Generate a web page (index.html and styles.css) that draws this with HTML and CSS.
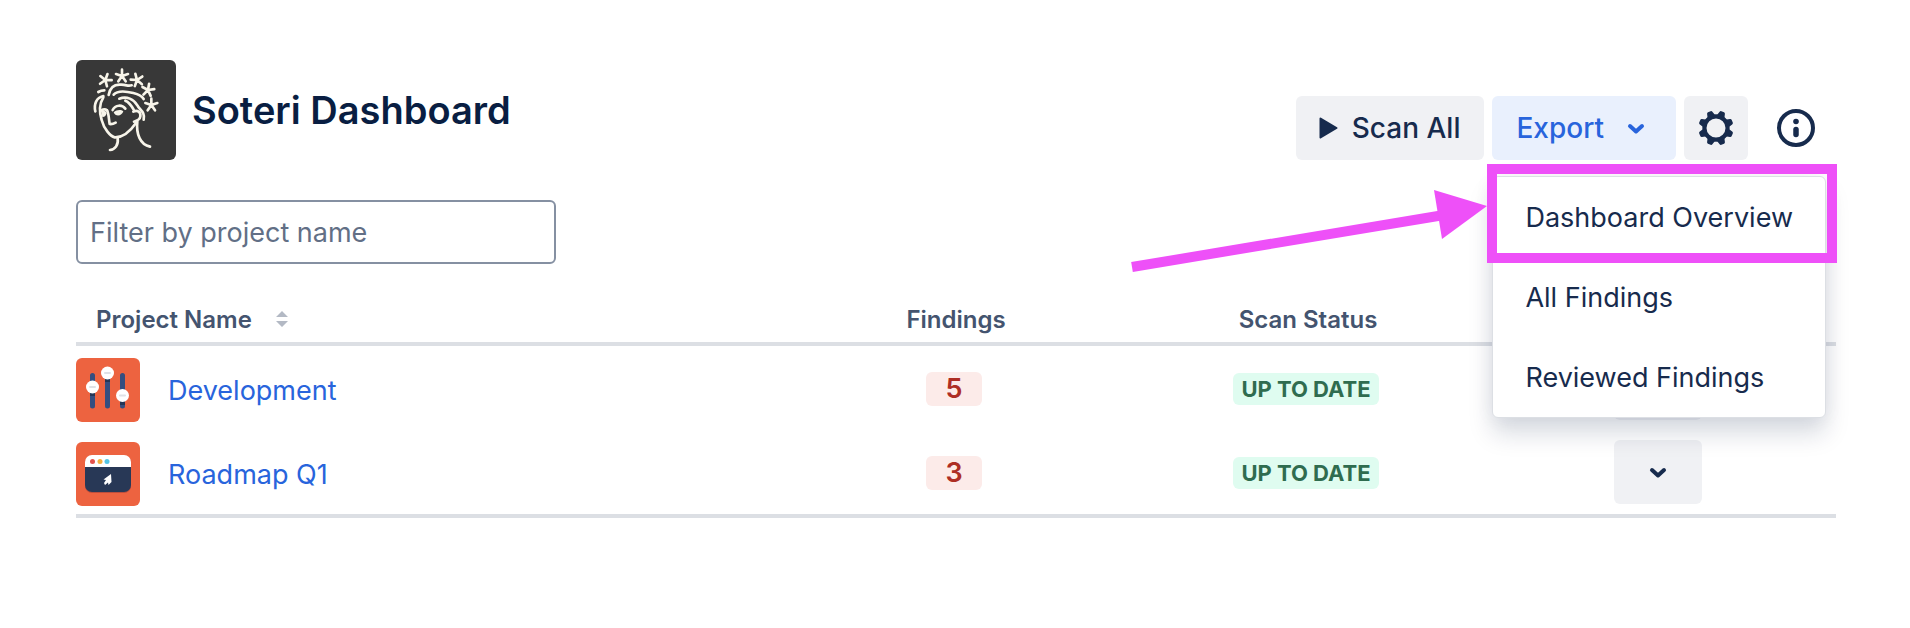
FILE: index.html
```
<!DOCTYPE html>
<html lang="en">
  <head>
    <meta charset="UTF-8" />
    <meta name="viewport" content="width=device-width, initial-scale=1.0" />
    <title>Soteri Dashboard</title>
    <link rel="stylesheet" href="styles.css">
  </head>
  <body>
    <div class="page">
      <header class="page-header">
        <div class="brand">
          <svg class="logo" viewBox="0 0 300 300" aria-hidden="true">
            <defs>
              <path id="star" d="M0 -19V0M18 -6L0 0M11 16L0 0M-11 16L0 0M-18 -6L0 0" />
            </defs>
            <rect width="300" height="300" rx="18" fill="#383838" />
            <g fill="none" stroke="#f8f5ea" stroke-width="8" stroke-linecap="round" stroke-linejoin="round">
              <use href="#star" transform="translate(88 60) rotate(20)" />
              <use href="#star" transform="translate(138 48)" />
              <use href="#star" transform="translate(183 60) rotate(-15)" />
              <use href="#star" transform="translate(216 90) rotate(10)" />
              <use href="#star" transform="translate(226 135)" />
              <path d="M98 105C102 82 116 72 136 74S156 79 167 76" />
              <path d="M113 104C126 89 152 94 172 99S199 110 203 117" />
              <path d="M130 116C152 107 174 118 184 136C190 150 208 154 203 179" />
              <path d="M148 122C158 126 166 136 173 149" />
              <path d="M67 96Q75 91 85 91M58 154C53 132 61 113 82 108" />
              <path d="M82 112C69 133 71 160 77 180C84 207 103 229 116 232C140 233 164 212 180 189" />
              <path d="M172 155C184 149 195 156 193 169C192 178 184 182 174 185" />
              <path d="M125 235C128 255 117 268 102 270M184 184C180 223 193 254 222 260" />
              <path d="M93 151C99 162 98 176 101 192Q110 193 119 188" />
              <path d="M110 150C118 134 138 133 148 146M76 151Q86 145 93 151" />
            </g>
            <g fill="#f8f5ea">
              <path d="M113 157C122 148 136 148 142 154C138 169 118 171 113 157Z" />
              <path d="M75 153Q90 150 92 159Q89 172 79 171Z" />
            </g>
          </svg>
          <h1>Soteri Dashboard</h1>
        </div>

        <div class="actions">
          <button class="btn btn-scan" type="button">
            <svg class="icon" viewBox="0 0 32 32" aria-hidden="true">
              <path d="M8.500 6.500L24.500 16L8.500 25.500Z" fill="currentColor" stroke="currentColor" stroke-width="2" stroke-linejoin="round" />
            </svg>
            Scan All
          </button>
          <div class="dropdown">
            <button class="btn btn-selected" type="button" aria-expanded="true">
              Export
              <svg class="icon" viewBox="0 0 32 32" aria-hidden="true">
                <path d="M10 14L16 19.500L22 14" fill="none" stroke="currentColor" stroke-width="4" stroke-linecap="round" stroke-linejoin="round" />
              </svg>
            </button>
            <div class="menu">
              <button type="button">Dashboard Overview</button>
              <button type="button">All Findings</button>
              <button type="button">Reviewed Findings</button>
            </div>
            <div class="highlight"></div>
            <svg class="arrow" viewBox="0 0 360 84" aria-hidden="true">
              <path d="M4 79L316 27" fill="none" stroke="#ee50f8" stroke-width="10" />
              <path d="M306 2L359 18L314 51Z" fill="#ee50f8" />
            </svg>
          </div>
          <button class="btn btn-icon" type="button" aria-label="Settings">
            <svg viewBox="0 0 40 40" aria-hidden="true">
              <circle cx="20" cy="20" r="12.200" fill="none" stroke="currentColor" stroke-width="4.400" />
              <g fill="currentColor">
                <path id="teeth" d="M15.500 8L17 2.800Q17.300 1.500 18.500 1.500H21.500Q22.700 1.500 23 2.800L24.500 8ZM15.500 32L17 37.200Q17.300 38.500 18.500 38.500H21.500Q22.700 38.500 23 37.200L24.500 32Z" transform="rotate(22.500 20 20)" />
                <use href="#teeth" transform="rotate(45 20 20)" />
                <use href="#teeth" transform="rotate(90 20 20)" />
                <use href="#teeth" transform="rotate(135 20 20)" />
              </g>
            </svg>
          </button>
          <button class="btn btn-info" type="button" aria-label="About">
            <svg viewBox="0 0 40 40" aria-hidden="true">
              <circle cx="20" cy="20" r="17" fill="none" stroke="currentColor" stroke-width="4" />
              <circle cx="20" cy="13.500" r="2.800" fill="currentColor" />
              <path d="M20 21.500V26.500" fill="none" stroke="currentColor" stroke-width="5.500" stroke-linecap="round" />
            </svg>
          </button>
        </div>
      </header>

      <input class="filter" type="text" placeholder="Filter by project name" aria-label="Filter by project name" />

      <table class="projects">
        <thead>
          <tr>
            <th class="col-name">
              <span class="sortable">
                Project Name
                <svg viewBox="0 0 12 16" aria-hidden="true">
                  <path d="M0 6L6 0L12 6ZM0 10L6 16L12 10Z" fill="#b3b9c4" />
                </svg>
              </span>
            </th>
            <th>Findings</th>
            <th>Scan Status</th>
            <th></th>
          </tr>
        </thead>
        <tbody>
          <tr>
            <td class="col-name">
              <div class="project">
                <svg class="avatar" viewBox="0 0 64 64" aria-hidden="true">
                  <rect width="64" height="64" rx="6" fill="#ed6340" />
                  <g fill="none" stroke="#344e80" stroke-width="5" stroke-linecap="round">
                    <path d="M16.500 17.500V48M31.500 17.500V48M46.500 17.500V48" />
                  </g>
                  <path d="M14 35h5v3h-5zM29 20h5v4h-5zM44 43h5v4h-5z" fill="#243656" />
                  <g fill="#fff">
                    <circle cx="16.500" cy="29" r="6.500" />
                    <circle cx="31.500" cy="15" r="6.500" />
                    <circle cx="46.500" cy="37.500" r="6.500" />
                  </g>
                  <path d="M14 29h5M29 15h5M44 37.500h5" fill="none" stroke="#dfe1e6" stroke-width="2" stroke-linecap="round" />
                </svg>
                <a href="#">Development</a>
              </div>
            </td>
            <td><span class="count">5</span></td>
            <td><span class="status">UP TO DATE</span></td>
            <td>
              <button class="btn btn-more" type="button" aria-label="Development actions">
                <svg class="icon" viewBox="0 0 32 32" aria-hidden="true">
                  <path d="M10 14L16 19.500L22 14" fill="none" stroke="currentColor" stroke-width="4" stroke-linecap="round" stroke-linejoin="round" />
                </svg>
              </button>
            </td>
          </tr>
          <tr>
            <td class="col-name">
              <div class="project">
                <svg class="avatar" viewBox="0 0 64 64" aria-hidden="true">
                  <rect width="64" height="64" rx="6" fill="#ed6340" />
                  <rect x="9" y="14" width="46" height="37" rx="7" fill="#bd4e3c" />
                  <path d="M9 25h46v18a7 7 0 0 1-7 7H16a7 7 0 0 1-7-7z" fill="#283856" />
                  <path d="M9 25v-5a7 7 0 0 1 7-7h32a7 7 0 0 1 7 7v5z" fill="#fff" />
                  <circle cx="16.500" cy="19.500" r="2.500" fill="#e5534d" />
                  <circle cx="24" cy="19.500" r="2.500" fill="#f6b03e" />
                  <circle cx="31" cy="19.500" r="2.500" fill="#54c5e4" />
                  <path d="M35 32L27.500 37.500L30 38L28 41L29 43L32 40.500L32.500 43L35.500 40Z" fill="#fff" />
                </svg>
                <a href="#">Roadmap Q1</a>
              </div>
            </td>
            <td><span class="count">3</span></td>
            <td><span class="status">UP TO DATE</span></td>
            <td>
              <button class="btn btn-more" type="button" aria-label="Roadmap Q1 actions">
                <svg class="icon" viewBox="0 0 32 32" aria-hidden="true">
                  <path d="M10 14L16 19.500L22 14" fill="none" stroke="currentColor" stroke-width="4" stroke-linecap="round" stroke-linejoin="round" />
                </svg>
              </button>
            </td>
          </tr>
        </tbody>
      </table>
    </div>
  </body>
</html>
```
FILE: styles.css
```
* {
  box-sizing: border-box;
}
body {
  margin: 0;
  background: #fff;
  color: #172b4d;
  font-family: Inter, sans-serif;
  font-size: 27px;
}
button,
input {
  font: inherit;
  color: inherit;
}

.page {
  padding: 60px 74px 0 76px;
}

.page-header {
  display: flex;
  justify-content: space-between;
  align-items: flex-end;
  margin-bottom: 40px;
}
.brand {
  display: flex;
  align-items: center;
  gap: 16px;
}
.logo {
  width: 100px;
  height: 100px;
}
h1 {
  margin: 0;
  color: #091e42;
  font-size: 38px;
  font-weight: 600;
}

.actions {
  display: flex;
  gap: 8px;
}
.btn {
  display: inline-flex;
  align-items: center;
  justify-content: center;
  height: 64px;
  padding: 0 24px;
  border: 0;
  border-radius: 6px;
  background: #f0f1f4;
  font-size: 28px;
  font-weight: 500;
}
.icon {
  width: 32px;
  height: 32px;
}
.btn-scan {
  gap: 8px;
  padding-left: 16px;
}
.btn-selected {
  gap: 16px;
  background: #e9f0fd;
  color: #2864dc;
}
.btn-icon {
  width: 64px;
  padding: 0;
}
.btn-info {
  width: 80px;
  padding: 0;
  background: none;
}
.btn-icon svg {
  width: 38px;
  height: 38px;
}
.btn-info svg {
  width: 40px;
  height: 40px;
}

.dropdown {
  position: relative;
}
.menu {
  position: absolute;
  top: 80px;
  left: 0;
  display: flex;
  flex-direction: column;
  border: 1px solid #dcdfe4;
  border-radius: 6px;
  background: #fff;
  box-shadow: 0 16px 24px rgba(9, 30, 66, 0.15), 0 0 20px rgba(9, 30, 66, 0.06);
}
.menu button {
  height: 80px;
  padding: 0 32px;
  border: 0;
  background: none;
  text-align: left;
  white-space: nowrap;
}

/* callout around the first menu item */
.highlight {
  position: absolute;
  top: 68px;
  left: -5px;
  width: 350px;
  height: 99px;
  border: 10px solid #ee50f8;
}
.arrow {
  position: absolute;
  top: 92px;
  right: 188px;
  width: 360px;
  height: 84px;
}

.filter {
  display: block;
  width: 480px;
  height: 64px;
  padding: 0 12px;
  border: 2px solid #8590a2;
  border-radius: 6px;
  background: #fff;
}
.filter::placeholder {
  color: #626f86;
  opacity: 1;
}

.projects {
  width: 100%;
  margin-top: 28px;
  border-collapse: separate;
  border-spacing: 0;
  table-layout: fixed;
}
th {
  height: 54px;
  padding: 4px 0 0;
  border-bottom: 4px solid #dcdfe4;
  color: #44546f;
  font-size: 24px;
  font-weight: 600;
}
td {
  height: 84px;
  padding: 0 4px 0 0;
  text-align: center;
}
tbody tr:last-child td {
  height: 88px;
  border-bottom: 4px solid #dcdfe4;
}
.col-name {
  width: 40%;
  text-align: left;
}
.sortable {
  display: flex;
  align-items: center;
  gap: 24px;
  padding-left: 20px;
}
.sortable svg {
  width: 12px;
  height: 16px;
}
.project {
  display: flex;
  align-items: center;
  gap: 28px;
  padding-top: 4px;
}
.avatar {
  width: 64px;
  height: 64px;
}
a {
  color: #2864dc;
  text-decoration: none;
}

.count,
.status {
  display: inline-block;
  border-radius: 6px;
  font-weight: 600;
  vertical-align: middle;
}
.count {
  min-width: 56px;
  background: #fcebe9;
  color: #ae2e24;
  line-height: 34px;
}
.status {
  padding: 0 8px;
  background: #dffcf0;
  color: #2f6c4f;
  font-size: 22px;
  font-weight: 700;
  line-height: 32px;
}
.btn-more {
  width: 88px;
  vertical-align: middle;
}
```
